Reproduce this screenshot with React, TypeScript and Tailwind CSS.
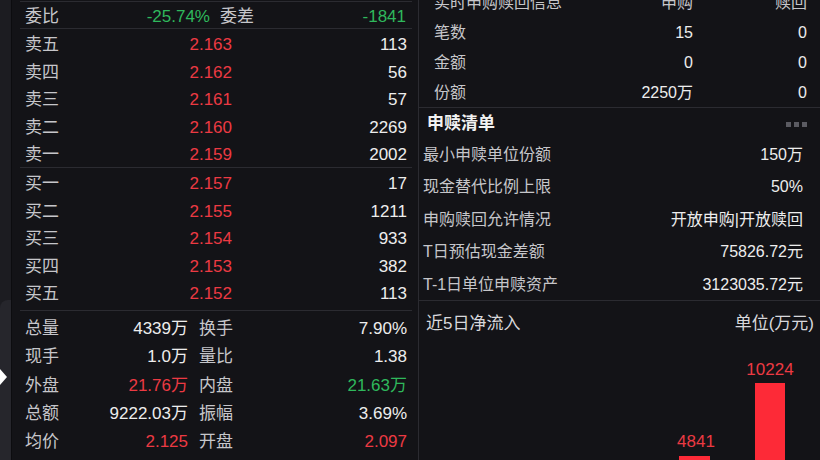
import React from 'react';

const FONT = { fontFamily: '"Liberation Sans", "Noto Sans CJK SC", sans-serif' };

const RED = 'text-[#ec3a43]';
const GREEN = 'text-[#2fb85c]';

const sells = [
  ['卖五', '2.163', '113'],
  ['卖四', '2.162', '56'],
  ['卖三', '2.161', '57'],
  ['卖二', '2.160', '2269'],
  ['卖一', '2.159', '2002'],
];

const buys = [
  ['买一', '2.157', '17'],
  ['买二', '2.155', '1211'],
  ['买三', '2.154', '933'],
  ['买四', '2.153', '382'],
  ['买五', '2.152', '113'],
];

const stats: [string, string, string, string, string, string][] = [
  ['总量', '4339万', '', '换手', '7.90%', ''],
  ['现手', '1.0万', '', '量比', '1.38', ''],
  ['外盘', '21.76万', RED, '内盘', '21.63万', GREEN],
  ['总额', '9222.03万', '', '振幅', '3.69%', ''],
  ['均价', '2.125', RED, '开盘', '2.097', RED],
];

const realtime = [
  ['笔数', '15', '0'],
  ['金额', '0', '0'],
  ['份额', '2250万', '0'],
];

const list = [
  ['最小申赎单位份额', '150万'],
  ['现金替代比例上限', '50%'],
  ['申购赎回允许情况', '开放申购|开放赎回'],
  ['T日预估现金差额', '75826.72元'],
  ['T-1日单位申赎资产', '3123035.72元'],
];

function QuoteRow({ label, price, vol }: { label: string; price: string; vol: string }) {
  return (
    <div className="flex items-center h-[27.6px] pt-[4px] px-[5px]">
      <span className="w-[60px] text-[#c6c6ca]">{label}</span>
      <span className={`w-[147px] text-right ${RED}`}>{price}</span>
      <span className="flex-1 text-right text-[#ededed]">{vol}</span>
    </div>
  );
}

export default function App() {
  return (
    <div className="w-[820px] h-[460px] overflow-hidden bg-[#131317] flex" style={FONT}>
      {/* sliver of neighbouring panel */}
      <div className="w-[12px] shrink-0 bg-[#1c1c21] border-r border-[#0c0c0f] flex flex-col">
        <div className="h-[300px]" />
        <div className="flex-1 bg-[#26262c] rounded-tl-[8px] relative">
          <div className="absolute left-0 top-[69px] w-0 h-0 border-y-[8px] border-y-transparent border-l-[7px] border-l-white" />
        </div>
      </div>

      {/* order book */}
      <div className="w-[406px] shrink-0 pl-[8px] pr-[6px] text-[17px]">
        <div className="mt-[1px] border-t border-[#2b2b31]" />
        <div className="flex items-center h-[27px] pt-[3px] px-[5px] border-b border-[#2b2b31]">
          <span className="w-[60px] text-[#c6c6ca]">委比</span>
          <span className={`w-[125px] text-right ${GREEN}`}>-25.74%</span>
          <span className="ml-[10px] text-[#c6c6ca]">委差</span>
          <span className={`flex-1 text-right pr-[1px] ${GREEN}`}>-1841</span>
        </div>
        <div className="border-b border-[#2b2b31]">
          {sells.map(([l, p, v]) => (
            <QuoteRow key={l} label={l} price={p} vol={v} />
          ))}
        </div>
        <div className="border-b border-[#2b2b31] pb-[4px]">
          {buys.map(([l, p, v]) => (
            <QuoteRow key={l} label={l} price={p} vol={v} />
          ))}
        </div>
        <div className="pt-[2px]">
          {stats.map(([l1, v1, c1, l2, v2, c2]) => (
            <div key={l1} className="flex items-center h-[28.2px] pt-[4px] px-[5px]">
              <span className="w-[60px] text-[#c6c6ca]">{l1}</span>
              <span className={`w-[103px] text-right ${c1 || 'text-[#ededed]'}`}>{v1}</span>
              <span className="ml-[11px] text-[#c6c6ca]">{l2}</span>
              <span className={`flex-1 text-right ${c2 || 'text-[#ededed]'}`}>{v2}</span>
            </div>
          ))}
        </div>
      </div>

      {/* subscription / redemption */}
      <div className="flex-1 border-l border-[#2b2b31] flex flex-col">
        <div className="mt-[-13px] border-b border-[#2b2b31] text-[16px]">
          <div className="flex items-center h-[30px] pt-[2px] pl-[15px] pr-[13px] text-[#c6c6ca]">
            <span className="flex-1">实时申购赎回信息</span>
            <span className="w-[100px] text-right">申购</span>
            <span className="w-[114px] text-right">赎回</span>
          </div>
          {realtime.map(([l, a, b]) => (
            <div key={l} className="flex items-center h-[30px] pt-[2px] pl-[15px] pr-[13px]">
              <span className="flex-1 text-[#c6c6ca]">{l}</span>
              <span className="w-[100px] text-right text-[#ededed]">{a}</span>
              <span className="w-[114px] text-right text-[#ededed]">{b}</span>
            </div>
          ))}
        </div>

        <div className="border-b border-[#2b2b31] h-[193px]">
          <div className="flex items-center h-[30px] pt-[2px] pl-[8px] pr-[13px]">
            <span className="flex-1 text-[17px] font-semibold text-[#f2f2f2]">申赎清单</span>
            <span className="flex gap-[3px]">
              <span className="w-[5px] h-[5px] bg-[#5b5b62]" />
              <span className="w-[5px] h-[5px] bg-[#5b5b62]" />
              <span className="w-[5px] h-[5px] bg-[#5b5b62]" />
            </span>
          </div>
          {list.map(([l, v]) => (
            <div key={l} className="flex items-center h-[32.5px] pt-[1px] pl-[4px] pr-[17px] text-[16px]">
              <span className="flex-1 text-[#c6c6ca]">{l}</span>
              <span className="text-[#ededed]">{v}</span>
            </div>
          ))}
        </div>

        <div className="flex-1 flex flex-col">
          <div className="flex items-center h-[44px] pt-[1px] pl-[7px] pr-[6px] text-[17px] text-[#d8d8dc]">
            <span className="flex-1">近5日净流入</span>
            <span>单位(万元)</span>
          </div>
          <div className="relative flex-1">
            <span className={`absolute left-[257px] top-[87px] w-[40px] text-center text-[17px] leading-[20px] ${RED}`}>
              4841
            </span>
            <div className="absolute left-[260px] top-[111px] w-[31px] h-[40px] bg-[#fd2a37]" />
            <span className={`absolute left-[326px] top-[15px] w-[50px] text-center text-[17px] leading-[20px] ${RED}`}>
              10224
            </span>
            <div className="absolute left-[336px] top-[38px] w-[30px] h-[100px] bg-[#fd2a37]" />
          </div>
        </div>
      </div>
    </div>
  );
}
